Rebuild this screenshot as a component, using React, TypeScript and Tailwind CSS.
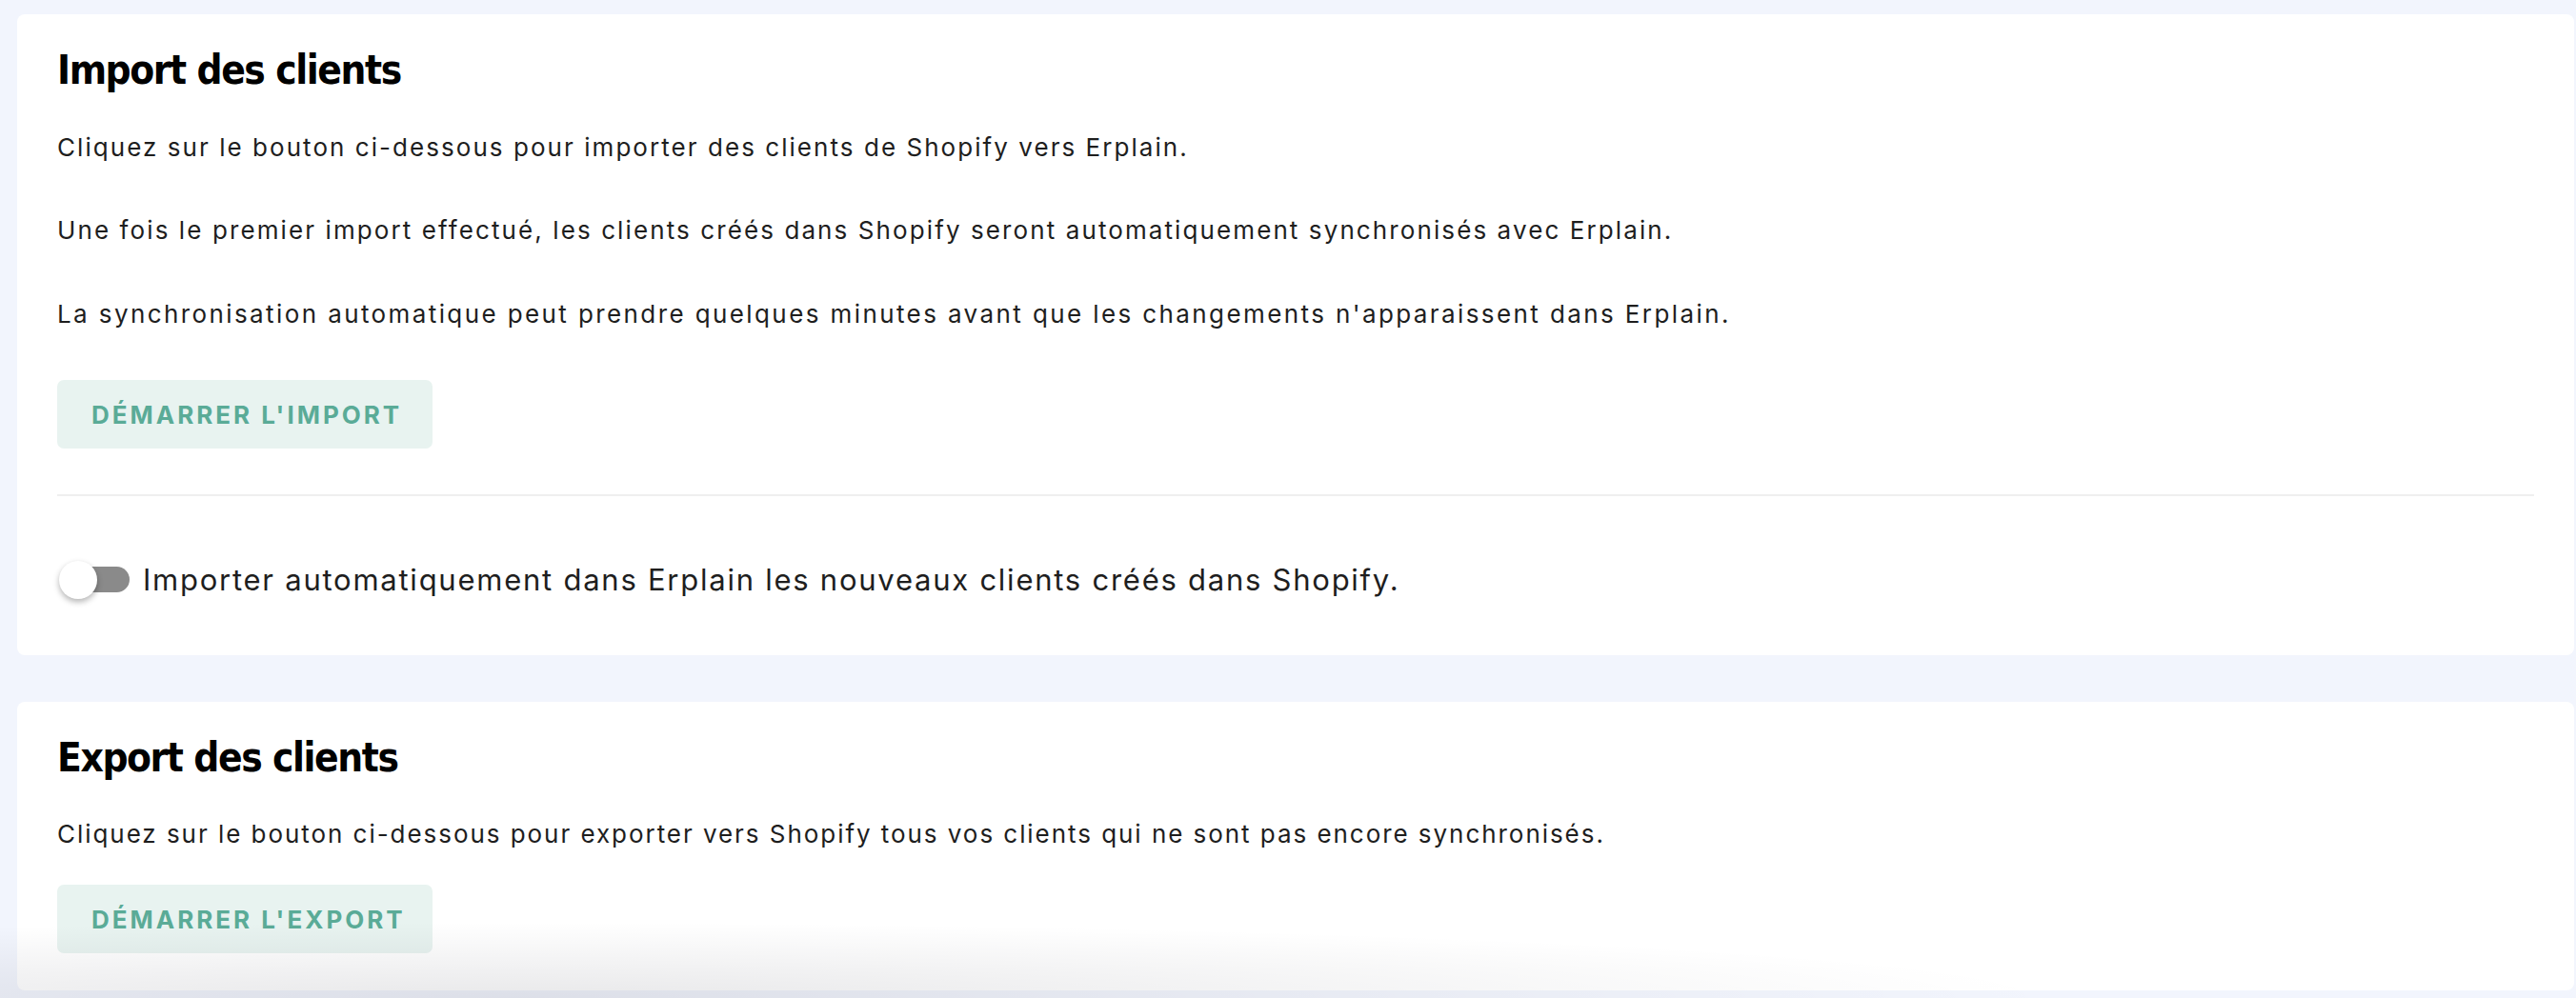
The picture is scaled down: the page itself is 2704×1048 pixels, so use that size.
import React from "react";

const body = { fontFamily: "Inter, 'Open Sans', sans-serif" };
const head = { fontFamily: "'DejaVu Sans Condensed', 'Liberation Sans', sans-serif" };

function Button({ label }: { label: string }) {
  return (
    <button
      className="h-[72px] w-[394px] rounded-[7px] bg-[#e8f3f0] pl-[36px] text-left text-[26px] font-bold uppercase tracking-[0.115em] text-[#5aab97]"
      style={body}
    >
      {label}
    </button>
  );
}

function Toggle() {
  return (
    <div className="relative h-[40px] w-[80px] shrink-0">
      <div className="absolute left-[6px] top-[6px] h-[27px] w-[70px] rounded-full bg-[#8a8a8a]" />
      <div className="absolute left-[2px] top-0 h-[40px] w-[40px] rounded-full bg-white shadow-[0_3px_6px_rgba(0,0,0,0.3)]" />
    </div>
  );
}

export default function App() {
  return (
    <div className="relative min-h-screen overflow-hidden bg-[#f2f5fd] pl-[18px] pr-[2px] pt-[15px]" style={body}>
      <div className="flex flex-col rounded-[8px] bg-white px-[42px] pb-[59px] pt-[34px]">
        <h2 className="text-[42px] font-bold leading-[50px] tracking-[-1.4px] text-black" style={head}>
          Import des clients
        </h2>
        <p className="mt-[36px] text-[26px] leading-[40px] tracking-[2.05px] text-[#1e1e1e]">
          Cliquez sur le bouton ci-dessous pour importer des clients de Shopify vers Erplain.
        </p>
        <p className="mt-[47px] text-[26px] leading-[40px] tracking-[2.1px] text-[#1e1e1e]">
          Une fois le premier import effectué, les clients créés dans Shopify seront automatiquement synchronisés avec Erplain.
        </p>
        <p className="mt-[48px] text-[26px] leading-[40px] tracking-[2.4px] text-[#1e1e1e]">
          La synchronisation automatique peut prendre quelques minutes avant que les changements n'apparaissent dans Erplain.
        </p>
        <div className="mt-[49px]">
          <Button label="Démarrer l'import" />
        </div>
        <div className="mt-[48px] h-[2px] bg-[#efefef]" />
        <div className="mt-[68px] flex items-center gap-[10px]">
          <Toggle />
          <span className="text-[31px] leading-[40px] tracking-[1.75px] text-[#1e1e1e]">
            Importer automatiquement dans Erplain les nouveaux clients créés dans Shopify.
          </span>
        </div>
      </div>

      <div className="mt-[49px] flex flex-col rounded-[8px] bg-white px-[42px] pb-[39px] pt-[34px]">
        <h2 className="text-[42px] font-bold leading-[50px] tracking-[-1.4px] text-black" style={head}>
          Export des clients
        </h2>
        <p className="mt-[35px] text-[26px] leading-[40px] tracking-[1.95px] text-[#1e1e1e]">
          Cliquez sur le bouton ci-dessous pour exporter vers Shopify tous vos clients qui ne sont pas encore synchronisés.
        </p>
        <div className="mt-[33px]">
          <Button label="Démarrer l'export" />
        </div>
      </div>

      <div className="pointer-events-none absolute bottom-0 left-0 right-0 h-[80px] bg-[radial-gradient(ellipse_60%_100%_at_20%_100%,rgba(0,0,20,0.09),rgba(0,0,0,0))]" />
    </div>
  );
}
